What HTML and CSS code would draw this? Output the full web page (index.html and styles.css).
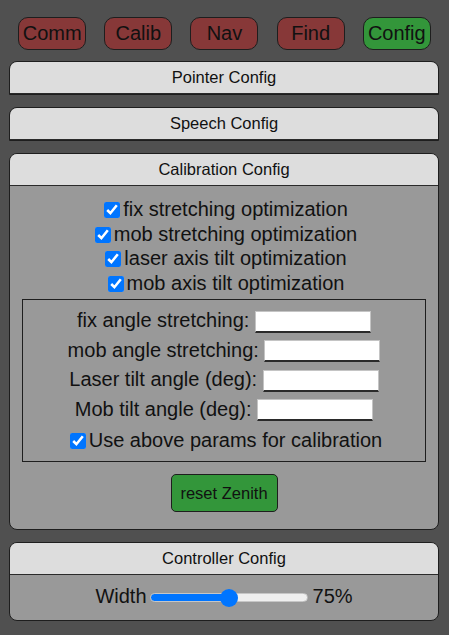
FILE: index.html
```html
<!DOCTYPE html>
<html>
<head>
<meta charset="utf-8">
<link rel="stylesheet" href="styles.css">
</head>
<body>
<nav class="tabs">
  <button class="tab">Comm</button>
  <button class="tab">Calib</button>
  <button class="tab">Nav</button>
  <button class="tab">Find</button>
  <button class="tab active">Config</button>
</nav>

<section class="panel collapsed">
  <div class="panel-head">Pointer Config</div>
</section>

<section class="panel collapsed">
  <div class="panel-head">Speech Config</div>
</section>

<section class="panel">
  <div class="panel-head">Calibration Config</div>
  <div class="panel-body calib">
    <label class="check-row"><input type="checkbox" checked>fix stretching optimization</label>
    <label class="check-row"><input type="checkbox" checked>mob stretching optimization</label>
    <label class="check-row"><input type="checkbox" checked>laser axis tilt optimization</label>
    <label class="check-row"><input type="checkbox" checked>mob axis tilt optimization</label>
    <div class="params">
      <div class="field-row">fix angle stretching: <input type="text" class="num"></div>
      <div class="field-row">mob angle stretching: <input type="text" class="num"></div>
      <div class="field-row">Laser tilt angle (deg): <input type="text" class="num"></div>
      <div class="field-row">Mob tilt angle (deg): <input type="text" class="num"></div>
      <label class="check-row use-row"><input type="checkbox" checked>Use above params for calibration</label>
    </div>
    <div class="btn-row"><button class="action">reset Zenith</button></div>
  </div>
</section>

<section class="panel">
  <div class="panel-head">Controller Config</div>
  <div class="panel-body ctrl">
    <div class="slider-row">Width<input type="range" class="range" min="0" max="100" value="50">75%</div>
  </div>
</section>
</body>
</html>
```

FILE: styles.css
```css
html, body {
  margin: 0;
  padding: 0;
  background: #505050;
  font-family: "Liberation Sans", Arial, sans-serif;
  color: #111;
}

body {
  padding: 17px 0 0;
}

.tabs {
  display: flex;
  justify-content: space-evenly;
  margin: 0 0 11px;
}

.tab {
  width: 68px;
  height: 33px;
  padding: 0;
  border: 1px solid #1e1e1e;
  border-radius: 10px;
  background: #873838;
  color: #111;
  font-family: "Liberation Sans", Arial, sans-serif;
  font-size: 20px;
  line-height: 31px;
}

.tab.active {
  background: #33963a;
}

.panel {
  margin: 0 10px 12px 9px;
  border: 1px solid #1e1e1e;
  border-radius: 8px;
  background: #999;
  overflow: hidden;
}

.panel.collapsed {
  border-bottom-left-radius: 0;
  border-bottom-right-radius: 0;
}

.panel-head {
  height: 31px;
  line-height: 31px;
  background: #dddddd;
  border-bottom: 1px solid #2a2a2a;
  text-align: center;
  font-size: 16.5px;
}

.panel-body {
  text-align: center;
  font-size: 20px;
}

.calib {
  padding: 11px 0 17px;
}

.check-row {
  display: block;
  height: 24.5px;
  line-height: 24.5px;
}

.check-row input {
  width: 16px;
  height: 16px;
  margin: 0 3px 0 4px;
  vertical-align: -2px;
}

.params {
  margin: 4px 12px 0 12px;
  border: 1px solid #1e1e1e;
  padding: 6px 0 9px;
}

.field-row {
  height: 29.5px;
  line-height: 29.5px;
}

.num {
  box-sizing: border-box;
  width: 116px;
  height: 22px;
  margin: 0;
  padding: 0;
  border: 1px solid #c4c4c4;
  border-bottom: 2px solid #2a2a2a;
  background: #fff;
  vertical-align: middle;
}

.use-row {
  margin-top: 4px;
  height: 24px;
  line-height: 24px;
}

.btn-row {
  margin-top: 12px;
}

.action {
  width: 107px;
  height: 38px;
  padding: 0;
  border: 1px solid #1e1e1e;
  border-radius: 5px;
  background: #33963a;
  color: #111;
  font-family: "Liberation Sans", Arial, sans-serif;
  font-size: 16.5px;
}

.ctrl {
  padding: 9px 0 11px;
}

.slider-row {
  height: 25px;
  line-height: 25px;
}

.range {
  -webkit-appearance: none;
  appearance: none;
  box-sizing: border-box;
  width: 158px;
  height: 9px;
  margin: 0 5px 0 3px;
  padding: 0;
  border: 1px solid #c6c6c6;
  border-radius: 5px;
  background: linear-gradient(to right, #0075ff 50%, #efefef 50%);
  vertical-align: middle;
}

.range::-webkit-slider-thumb {
  -webkit-appearance: none;
  appearance: none;
  width: 18px;
  height: 18px;
  border: none;
  border-radius: 50%;
  background: #0075ff;
}
```
